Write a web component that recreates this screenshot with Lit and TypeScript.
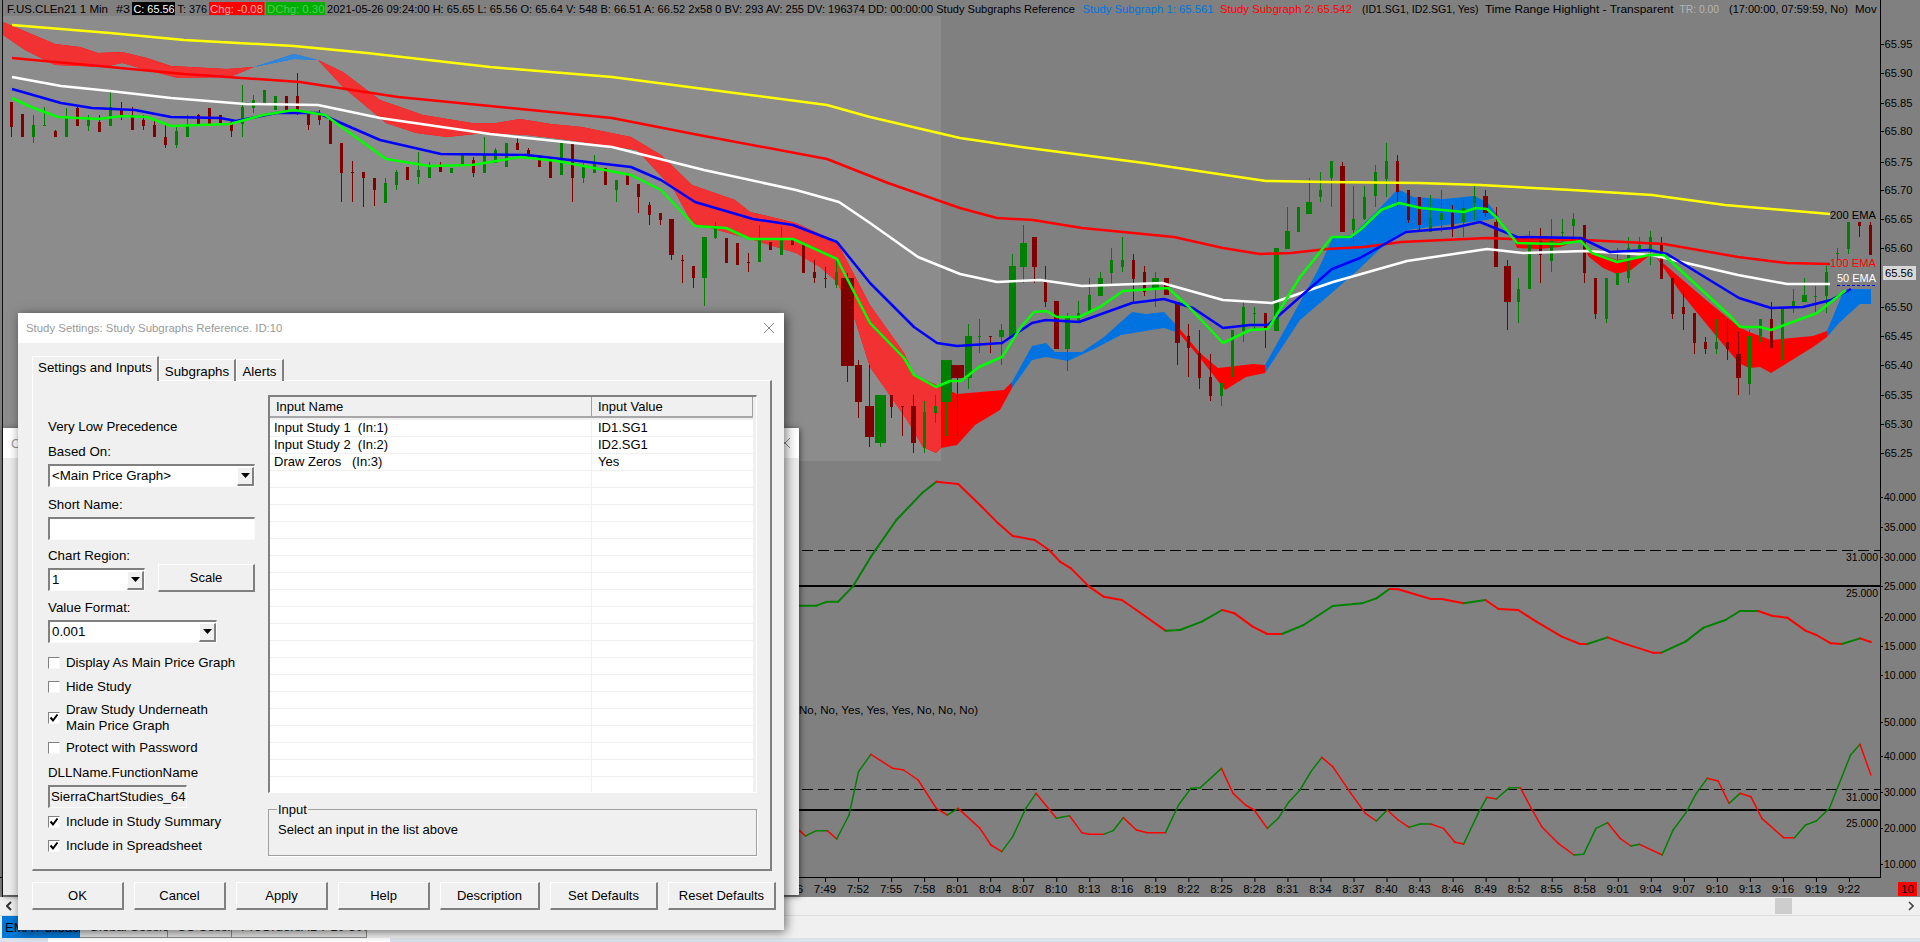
import { LitElement, html, css, svg } from "lit";
import { customElement } from "lit/decorators.js";

type P = [number, number];
const RED = "#ff0000", GRN = "#008000", DRED = "#800000";

const yellow: P[] = [[12,25],[110,33],[184,40],[294,46],[367,53],[490,67],[612,77],[735,93],[827,105],[870,117],[960,138],[1021,147],[1144,163],[1266,181],[1327,182],[1419,183],[1480,185],[1572,190],[1652,195],[1725,205],[1830,214]];
const red100: P[] = [[12,58],[110,67],[184,74],[300,82],[398,97],[490,106],[612,118],[704,136],[827,159],[888,183],[960,208],[997,218],[1033,220],[1082,228],[1174,237],[1223,248],[1260,254],[1291,253],[1327,249],[1364,247],[1401,242],[1487,238],[1511,239],[1585,240],[1664,244],[1738,257],[1787,263],[1830,264]];
const white50: P[] = [[12,77],[61,86],[110,91],[171,98],[245,104],[318,105],[380,118],[490,134],[612,147],[704,170],[796,190],[839,202],[870,223],[918,257],[960,274],[997,282],[1040,280],[1082,286],[1162,283],[1223,300],[1272,303],[1333,282],[1407,261],[1487,249],[1523,253],[1585,251],[1652,255],[1738,275],[1787,284],[1830,284]];
const blue: P[] = [[12,89],[61,103],[92,108],[135,110],[171,117],[220,118],[236,121],[276,113],[318,113],[380,140],[441,154],[527,155],[631,167],[661,180],[695,202],[753,219],[793,225],[837,242],[870,283],[914,327],[937,343],[957,346],[1002,343],[1032,323],[1046,320],[1079,322],[1132,303],[1164,299],[1193,308],[1223,328],[1250,325],[1268,325],[1332,269],[1360,258],[1406,232],[1453,228],[1480,222],[1517,237],[1581,238],[1610,252],[1649,250],[1667,254],[1739,298],[1771,308],[1803,307],[1831,300],[1851,289]];
const green: P[] = [[12,98],[31,107],[58,117],[98,119],[122,116],[147,117],[171,126],[230,124],[263,115],[294,110],[325,115],[386,159],[429,166],[472,165],[520,157],[557,161],[631,175],[661,190],[695,226],[726,228],[750,239],[793,239],[837,259],[870,323],[904,358],[914,375],[936,387],[950,381],[961,381],[979,367],[1002,357],[1021,327],[1034,312],[1046,311],[1057,317],[1079,317],[1100,307],[1123,291],[1168,288],[1189,307],[1223,343],[1250,330],[1268,329],[1300,277],[1332,237],[1350,237],[1360,230],[1381,210],[1399,203],[1421,208],[1464,212],[1476,208],[1487,209],[1496,217],[1517,243],[1560,244],[1581,241],[1592,253],[1617,262],[1649,255],[1664,255],[1731,317],[1740,327],[1760,327],[1771,330],[1817,313],[1846,290]];

const RIB_RED = "#ff0000", RIB_BLUE = "#0073e0";
const ribbons: { c: string; up: P[]; lo: P[] }[] = [
  { c: RIB_RED, up: [[3,22],[55,44],[80,47],[98,53],[122,52],[147,58],[171,66],[227,69],[254,67]], lo: [[3,35],[25,50],[55,65],[104,67],[122,63],[147,70],[178,78],[230,77],[254,67]] },
  { c: RIB_BLUE, up: [[254,67],[294,54],[318,60]], lo: [[254,67],[294,59],[318,60]] },
  { c: RIB_RED, up: [[318,60],[343,72],[380,100],[423,115],[472,123],[496,123],[520,119],[551,124],[582,127],[631,137],[661,155],[692,185],[735,200],[750,212],[796,223],[837,242],[870,305],[904,353],[914,375],[941,387],[957,394],[1004,390],[1012,382]], lo: [[318,60],[343,87],[386,123],[416,133],[447,137],[484,133],[527,135],[569,140],[637,150],[674,190],[692,223],[750,239],[796,253],[820,267],[837,282],[855,320],[870,367],[907,420],[923,447],[936,453],[941,448],[957,445],[975,425],[1000,410],[1012,388]] },
  { c: RIB_BLUE, up: [[1012,382],[1032,346],[1046,343],[1055,352],[1082,352],[1104,337],[1132,312],[1146,314],[1164,312],[1179,328]], lo: [[1012,388],[1032,360],[1046,357],[1068,361],[1096,348],[1121,335],[1164,328],[1179,333]] },
  { c: RIB_RED, up: [[1179,328],[1200,353],[1218,368],[1253,364],[1265,365]], lo: [[1179,333],[1200,358],[1225,390],[1246,377],[1265,373]] },
  { c: RIB_BLUE, up: [[1265,365],[1318,270],[1333,237],[1352,235],[1376,212],[1398,189],[1413,197],[1444,199],[1474,196],[1487,202],[1499,217],[1514,240]], lo: [[1265,373],[1300,320],[1327,297],[1358,270],[1382,247],[1407,230],[1462,223],[1487,220],[1499,217],[1514,240]] },
  { c: RIB_RED, up: [[1514,240],[1574,242]], lo: [[1514,240],[1517,248],[1539,249],[1560,247],[1574,242]] },
  { c: RIB_RED, up: [[1585,250],[1617,260],[1649,255]], lo: [[1585,250],[1589,257],[1603,268],[1617,274],[1631,270],[1649,256]] },
  { c: RIB_RED, up: [[1656,257],[1706,300],[1739,327],[1749,332],[1771,340],[1813,336],[1827,331]], lo: [[1656,257],[1681,293],[1717,337],[1739,363],[1749,368],[1760,367],[1771,373],[1813,347],[1827,337]] },
  { c: RIB_BLUE, up: [[1827,331],[1844,290],[1851,289],[1871,289]], lo: [[1827,337],[1839,323],[1860,304],[1871,304]] },
];

// high, body top, body bottom, low, colour (1 = up/green, 0 = down/red), body width
const C: number[][] = [
[102,102,127,137,0],[114,114,137,137,0],[115,125,137,143,1],[107,125,126,126,1],[130,131,137,137,0],[108,117,137,137,1],[107,108,126,126,0],[115,118,126,131,1],[115,122,132,132,0],[92,107,126,126,1],
[102,110,117,120,0],[107,115,130,130,0],[115,120,126,130,0],[120,125,137,137,0],[125,137,145,148,0],[125,131,145,148,1],[115,124,137,137,1],[114,115,124,124,0],[108,108,124,124,0],[115,115,123,123,0],
[120,122,131,137,0],[85,107,124,137,1],[95,100,108,113,1],[90,90,103,103,1],[96,96,110,110,1],[96,96,110,110,0],[73,96,110,115,0],[113,113,125,130,0],[110,115,120,125,0],[118,118,144,144,0],
[143,143,173,202,0],[161,172,173,202,0],[172,172,178,207,0],[178,178,190,206,0],[178,183,203,203,1],[170,172,185,190,1],[167,167,180,180,0],[152,170,177,184,1],[162,167,178,178,1],[162,167,172,172,0],
[168,168,173,173,1],[155,155,165,165,1],[157,160,173,177,0],[137,155,173,173,1],[148,150,163,163,1],[143,143,167,167,1],[137,143,150,150,0],[148,150,157,157,0],[155,157,167,167,0],[157,157,178,178,0],
[142,143,175,175,1],[143,143,178,202,0],[163,165,178,183,1],[155,163,173,173,1],[168,168,185,185,0],[180,180,190,202,1],[173,173,185,185,0],[184,184,197,213,0],[202,205,215,225,0],[213,213,220,225,0],
[219,219,255,260,0,5],[255,260,261,283,0],[266,266,278,288,0],[237,237,278,306,1,5],[222,228,238,239,1],[238,238,263,263,0],[243,243,265,265,0],[253,262,263,272,0],[225,238,262,262,1],[242,242,250,250,0],
[227,240,255,255,1],[239,239,245,245,0],[245,245,273,273,0],[260,272,278,283,0],[267,278,279,288,0],[260,272,285,288,1],[273,278,366,382,0,13],[360,365,402,418,0,7],[365,406,437,447,0,9],[395,395,443,447,1,11],
[395,395,407,418,0],[406,406,407,436,0],[395,406,443,453,0,5],[401,412,448,453,1],[395,406,413,423,1],[360,360,402,436,1,11],[365,365,378,436,0,13],[324,336,378,389,1,7],[319,336,337,353,1],[336,336,337,353,0],
[324,330,337,365,1,5],[254,266,337,337,1,7],[225,243,267,283,1,7],[237,237,267,283,0,5],[266,281,302,307,0],[301,301,349,349,0,5],[313,318,349,371,1,5],[301,313,322,322,1],[278,295,312,312,1],[272,278,296,296,1,5],
[248,260,273,284,1],[237,260,267,272,1],[254,260,279,302,0],[266,272,292,296,0],[272,278,288,307,1,7],[278,278,295,295,0,5],[302,302,343,365,0,5],[324,336,348,377,0],[330,353,378,389,0],[354,377,396,401,0],
[377,383,396,406,1],[330,330,377,377,1],[302,307,331,342,1],[307,313,314,330,1],[313,313,330,348,0],[248,248,331,331,1,5],[207,231,249,249,1,5],[207,207,232,232,1],[178,202,214,214,1,6],[172,190,197,202,1],
[161,161,178,207,1],[162,166,232,232,0,5],[186,219,230,243,1],[186,197,219,220,1],[165,172,196,207,1],[143,161,179,197,1],[155,161,192,207,0],[190,190,220,223,0],[197,197,225,230,0],[195,218,232,232,1],
[190,213,220,232,1],[205,213,228,237,0],[200,208,222,237,1],[186,196,203,220,1],[190,196,213,217,0,5],[207,222,267,267,0,4],[260,266,302,330,0,7],[278,289,302,323,1],[231,243,289,289,1],[228,237,255,283,0],
[219,237,261,272,1],[219,232,233,243,1],[213,219,226,243,1],[225,225,273,283,0],[278,278,314,319,0],[278,278,319,323,1],[248,273,285,285,1],[237,248,278,283,1],[237,245,249,249,1],[231,237,250,265,1],
[237,243,279,279,0],[278,278,314,319,0],[290,307,314,330,0],[313,313,343,354,0],[337,342,349,354,0],[319,342,349,354,1],[319,342,349,360,0],[332,354,378,395,0,5],[330,336,384,395,1],[319,319,336,342,1],
[302,319,348,348,0],[308,308,343,360,1],[289,301,308,313,1],[278,295,302,302,1,5],[286,296,297,313,1],[266,272,296,313,1],[248,253,254,260,1],[222,222,249,254,1],[222,222,226,237,0],[222,225,255,255,0],
];

const osc1z: P[] = [[27,497],[50,497],[65,485],[80,485],[100,440],[125,350],[160,240],[195,160],[215,125],[245,132],[275,195],[300,250],[320,288],[350,300],[370,330],[385,365],[400,385],[425,440],[445,470],[470,480],[490,510],[530,572],[550,570],[580,545],[608,510],[625,520],[650,560],[670,582],[690,582],[720,555],[760,498],[800,490],[820,475],[838,447],[850,448],[895,477],[910,477],[940,490],[970,480],[988,507],[1015,510],[1040,545],[1075,590],[1100,612],[1110,612],[1138,592],[1160,610],[1200,638],[1212,638],[1245,605],[1270,563],[1300,540],[1320,513],[1345,513],[1365,528],[1385,533],[1410,572],[1425,585],[1445,610],[1460,612],[1485,595],[1500,606]];
const osc2z: P[] = [[27,1172],[35,1188],[50,1172],[65,1172],[78,1197],[95,1125],[108,995],[125,943],[155,985],[170,990],[190,1020],[215,1105],[230,1125],[245,1105],[275,1165],[290,1215],[305,1235],[320,1190],[338,1105],[352,1060],[380,1135],[398,1127],[415,1178],[425,1183],[445,1183],[458,1172],[472,1133],[490,1170],[505,1178],[530,1178],[548,1095],[565,1045],[578,1043],[607,985],[623,1060],[640,1095],[652,1110],[670,1165],[685,1135],[700,1085],[715,1050],[730,995],[745,952],[760,980],[785,1060],[805,1120],[820,1143],[835,1110],[850,1140],[865,1162],[880,1152],[895,1152],[912,1165],[928,1207],[940,1212],[960,1120],[972,1072],[985,1077],[1003,1043],[1018,1043],[1033,1105],[1048,1162],[1070,1210],[1092,1245],[1105,1243],[1122,1165],[1138,1148],[1155,1195],[1170,1218],[1182,1213],[1213,1245],[1228,1170],[1245,1120],[1260,1060],[1275,1015],[1290,1023],[1305,1090],[1320,1060],[1335,1070],[1350,1135],[1380,1193],[1395,1193],[1410,1155],[1425,1143],[1443,1105],[1472,945],[1485,913],[1500,1005]];
const fromZoom = (p: P[]): P[] => p.map(([x, y]) => [780 + x / 1.375, 440 + y / 3] as P);

const headerItems: { t: string; x: number; x2: number; c: string }[] = [
  { t: "F.US.CLEn21  1 Min", x: 7, x2: 108, c: "#000" },
  { t: "#3", x: 116, x2: 130, c: "#000" },
  { t: "C: 65.56", x: 133.5, x2: 174.5, c: "#fff" },
  { t: "T: 376", x: 177.5, x2: 207, c: "#000" },
  { t: "Chg: -0.08", x: 210, x2: 263, c: "#ffb0b0" },
  { t: "DChg: 0.30", x: 267, x2: 324.5, c: "#58c858" },
  { t: "2021-05-26 09:24:00 H: 65.65 L: 65.56 O: 65.64 V: 548 B: 66.51 A: 66.52 2x58 0 BV: 293 AV: 255 DV: 196374 DD: 00:00:00 Study Subgraphs Reference", x: 327, x2: 1075, c: "#000" },
  { t: "Study Subgraph 1: 65.561", x: 1082.5, x2: 1213.5, c: "#0073e0" },
  { t: "Study Subgraph 2: 65.542", x: 1220, x2: 1352, c: "#ff0000" },
  { t: "(ID1.SG1, ID2.SG1, Yes)", x: 1362, x2: 1478.5, c: "#000" },
  { t: "Time Range Highlight - Transparent", x: 1485, x2: 1673.5, c: "#000" },
  { t: "TR: 0.00", x: 1679.5, x2: 1719, c: "#b4b4b4" },
  { t: "(17:00:00, 07:59:59, No)", x: 1729, x2: 1848, c: "#000" },
];

const priceAxis: [string, number][] = [["65.95",44],["65.90",73],["65.85",103],["65.80",131],["65.75",162],["65.70",190],["65.65",219],["65.60",248],["65.50",307],["65.45",336],["65.40",365],["65.35",395],["65.30",424],["65.25",453]];
const oscAxis: [string, number][] = [["40.000",497],["35.000",527],["30.000",557],["25.000",586],["20.000",617],["15.000",646],["10.000",675],["50.000",722],["40.000",756],["30.000",792],["20.000",828],["10.000",864]];
const times = (() => {
  const out: string[] = [];
  for (let m = 7 * 60 + 46; m <= 9 * 60 + 22; m += 3) out.push(`${Math.floor(m / 60)}:${String(m % 60).padStart(2, "0")}`);
  return out;
})();

const pts = (p: P[]) => p.map(([x, y]) => `${x.toFixed(1)},${y.toFixed(1)}`).join(" ");

function oscLine(points: P[], w: number) {
  let last = GRN;
  const segs = [];
  for (let i = 1; i < points.length; i++) {
    const [a, b] = [points[i - 1], points[i]];
    const c = b[1] < a[1] - 0.5 ? GRN : b[1] > a[1] + 0.5 ? RED : (i % 2 ? last : RED);
    last = c;
    segs.push(svg`<line x1=${a[0]} y1=${a[1]} x2=${b[0]} y2=${b[1]} stroke=${c} stroke-width=${w} stroke-linecap="round"></line>`);
  }
  return segs;
}

function ribbonLayer(on: boolean) {
  return ribbons.map((r) => {
    const fill = on ? (r.c === RIB_RED ? "#f23232" : "#3286dc") : r.c;
    return svg`<polygon points=${pts([...r.up, ...[...r.lo].reverse()])} fill=${fill}></polygon>`;
  });
}

function chart() {
  return svg`<svg class="chart" width="1920" height="897" viewBox="0 0 1920 897">
    <defs><clipPath id="session"><rect x="3" y="16" width="938" height="445"></rect></clipPath></defs>
    <rect width="1920" height="897" fill="#808080"></rect>
    <rect x="3" y="16" width="938" height="445" fill="#8c8c8c"></rect>
    <rect x="2" y="0" width="1" height="897" fill="#111"></rect>
    ${ribbonLayer(false)}
    <g clip-path="url(#session)">${ribbonLayer(true)}</g>
    ${C.map((c, k) => {
      const x = 11 * (k + 1);
      const col = c[4] ? GRN : DRED;
      const w = c[5] ?? 3;
      return svg`<rect x=${x} y=${c[0]} width="1" height=${c[3] - c[0]} fill=${col}></rect>
        <rect x=${x - Math.floor(w / 2)} y=${c[1]} width=${w} height=${Math.max(1, c[2] - c[1])} fill=${col}></rect>`;
    })}
    <polyline class="ema" points=${pts(white50)} stroke="#ffffff"></polyline>
    <polyline class="ema" points=${pts(red100)} stroke="#ff0000"></polyline>
    <polyline class="ema" points=${pts(yellow)} stroke="#ffff00"></polyline>
    <polyline class="ema" points=${pts(blue)} stroke="#0000ff"></polyline>
    <polyline class="ema" points=${pts(green)} stroke="#00ff00"></polyline>
    <line x1="1837" y1="285.5" x2="1876" y2="285.5" stroke="#0000ff" stroke-dasharray="3 2"></line>

    <rect x="132" y="2" width="43" height="13" fill="#000"></rect>
    <rect x="209" y="2" width="55.5" height="13" fill="#ff0000"></rect>
    <rect x="266" y="2" width="59" height="13" fill="#00b000"></rect>
    ${headerItems.map((h) => svg`<text class="h" x=${h.x} y="13" fill=${h.c} textLength=${h.x2 - h.x} lengthAdjust="spacingAndGlyphs">${h.t}</text>`)}
    <text class="h" x="1855" y="13" fill="#000">Mov</text>
    <rect x="1880" y="0" width="40" height="16" fill="#808080"></rect>

    <rect x="1880" y="0" width="1" height="878" fill="#000"></rect>
    ${priceAxis.map(([t, y]) => svg`<rect x="1880" y=${y} width="4" height="1" fill="#000"></rect><text class="h" x="1884.5" y=${y + 4} fill="#000" textLength="28" lengthAdjust="spacingAndGlyphs">${t}</text>`)}
    ${oscAxis.map(([t, y]) => svg`<rect x="1880" y=${y} width="3" height="1" fill="#000"></rect><text class="h" x="1884" y=${y + 4} fill="#000" textLength="32" lengthAdjust="spacingAndGlyphs">${t}</text>`)}

    <text class="h" x="1830" y="219" fill="#000" textLength="46" lengthAdjust="spacingAndGlyphs">200 EMA</text>
    <text class="h" x="1830" y="267" fill="#ff0000" textLength="46" lengthAdjust="spacingAndGlyphs">100 EMA</text>
    <text class="h" x="1837" y="282" fill="#ffffff" textLength="39" lengthAdjust="spacingAndGlyphs">50 EMA</text>
    <rect x="1883" y="266" width="33" height="14" fill="#d8d8d8"></rect>
    <text class="h" x="1885" y="277" fill="#000" textLength="28" lengthAdjust="spacingAndGlyphs">65.56</text>

    <line x1="786" y1="550.5" x2="1880" y2="550.5" stroke="#000" stroke-dasharray="11 5"></line>
    <rect x="786" y="585" width="1094" height="2" fill="#000"></rect>
    <line x1="786" y1="789.5" x2="1880" y2="789.5" stroke="#000" stroke-dasharray="11 5"></line>
    <rect x="786" y="809" width="1094" height="2" fill="#000"></rect>
    <text class="h" x="1846" y="561" fill="#000" textLength="32" lengthAdjust="spacingAndGlyphs">31.000</text>
    <text class="h" x="1846" y="597" fill="#000" textLength="32" lengthAdjust="spacingAndGlyphs">25.000</text>
    <text class="h" x="1846" y="801" fill="#000" textLength="32" lengthAdjust="spacingAndGlyphs">31.000</text>
    <text class="h" x="1846" y="827" fill="#000" textLength="32" lengthAdjust="spacingAndGlyphs">25.000</text>
    ${oscLine(fromZoom(osc1z), 2)}
    ${oscLine(fromZoom(osc2z), 1.5)}
    <text class="h" x="799" y="714" fill="#000" textLength="179" lengthAdjust="spacingAndGlyphs">No, No, Yes, Yes, Yes, No, No, No)</text>

    <rect x="0" y="877" width="1880" height="1" fill="#000"></rect>
    ${times.map((t, i) => {
      const x = 792 + 33.03 * i;
      return svg`<rect x=${x} y="877" width="1" height="5" fill="#000"></rect><text class="h" x=${x} y="893" text-anchor="middle" fill="#000">${t}</text>`;
    })}
    <rect x="1898" y="882" width="19" height="14" fill="#ff0000"></rect>
    <text class="h" x="1907.5" y="893" text-anchor="middle" fill="#000">10</text>
  </svg>`;
}

const check = html`<svg class="tick" viewBox="0 0 10 10" width="10" height="10"><path d="M1.5 4.5 L4 7.5 L8.5 1.5" fill="none" stroke="#000" stroke-width="2"></path></svg>`;
const arrow = html`<span class="drop"><svg viewBox="0 0 9 5" width="9" height="5"><path d="M0 0H9L4.5 5Z" fill="#000"></path></svg></span>`;
const closeX = html`<svg class="x" viewBox="0 0 10 10" width="10" height="10"><path d="M0 0L10 10M10 0L0 10" stroke="#8c8c8c" fill="none"></path></svg>`;

@customElement("app-root")
export class AppRoot extends LitElement {
  static styles = css`
    :host { display: block; position: relative; width: 1920px; height: 942px; overflow: hidden; font-family: "Liberation Sans", Arial, sans-serif; font-size: 13px; color: #000; }
    .desk { display: flex; flex-direction: column; height: 942px; background: #f0f0f0; }
    .chart { display: block; flex: none; }
    .h { font-family: "Liberation Sans", Arial, sans-serif; font-size: 11.5px; }
    .ema { fill: none; stroke-width: 2.5; stroke-linejoin: round; }
    .hscroll { flex: none; height: 18px; background: #f0f0f0; border-bottom: 1px solid #dcdcdc; display: flex; align-items: center; padding: 0 6px; justify-content: space-between; }
    .hscroll .track { flex: 1; display: flex; justify-content: flex-end; padding-right: 116px; }
    .hscroll .thumb { width: 17px; height: 16px; background: #cdcdcd; }
    .hscroll svg { display: block; }
    .tabbar { flex: none; height: 22px; display: flex; padding-left: 2px; background: #f0f0f0; }
    .tabbar span { display: flex; align-items: center; padding: 0 0 0 9px; border-right: 1px solid #8c8c8c; border-bottom: 1px solid #8c8c8c; background: #e6e6e6; color: #222; box-sizing: border-box; white-space: nowrap; overflow: hidden; }
    .tabbar .on { background: #0078d7; width: 78px; color: #001; border: none; padding-left: 3px; }
    .tabbar .s1 { width: 88px; }
    .tabbar .s2 { width: 64px; }
    .tabbar .s3 { width: 135px; }
    .stripe { flex: 1; background: #dde3ec; display: flex; padding-left: 48px; }
    .stripe i { display: block; width: 342px; background: #fff; }

    .win { position: absolute; box-sizing: border-box; background: #f0f0f0; }
    .back { left: 3px; top: 428px; width: 796px; height: 467px; background: #ebebeb; box-shadow: 1px 1px 6px rgba(0,0,0,.55); }
    .front { left: 18px; top: 313px; width: 766px; height: 617px; box-shadow: 2px 2px 10px rgba(0,0,0,.55); }
    .title { height: 30px; background: #fff; display: flex; align-items: center; justify-content: space-between; padding: 0 10px 0 8px; color: #999; font-size: 11.4px; }
    .back .title { padding: 0 9px 0 8px; font-size: 13px; }
    .x { display: block; }

    .body { padding: 14px 0 0 14px; }
    .tabs { display: flex; align-items: flex-end; height: 24px; position: relative; z-index: 1; margin-bottom: -1px; font-size: 13.3px; }
    .tab { box-sizing: border-box; height: 22px; display: flex; align-items: center; justify-content: center; border-top: 1px solid #fff; border-left: 1px solid #fff; border-right: 2px solid #808080; padding-top: 1px; }
    .tab.on { height: 25px; width: 127px; background: #f0f0f0; padding: 0 0 3px; }
    .t2 { width: 77px; }
    .t3 { width: 48px; }
    .panel { box-sizing: border-box; width: 740px; height: 491px; border-top: 1px solid #fff; border-left: 1px solid #fff; border-right: 2px solid #808080; border-bottom: 2px solid #808080; display: flex; padding: 14px 0 0 15px; gap: 13px; }

    .left { width: 207px; flex: none; display: flex; flex-direction: column; padding-top: 24px; font-size: 13.3px; }
    .lbl { display: block; line-height: 16px; height: 16px; white-space: nowrap; }
    .m12 { margin-top: 12px; }
    .m10 { margin-top: 10px; }
    .m9 { margin-top: 9px; }
    .m8 { margin-top: 8px; }
    .m4 { margin-top: 4px; }

    .sunk { box-sizing: border-box; height: 23px; background: #fff; border-top: 2px solid #808080; border-left: 2px solid #808080; border-right: 1px solid #fbfbfb; border-bottom: 1px solid #fbfbfb; display: flex; align-items: center; justify-content: space-between; padding-left: 2px; line-height: 16px; }
    .ro { background: #f0f0f0; width: 139px; overflow: hidden; white-space: nowrap; padding-left: 1px; }
    .w97 { width: 97px; margin-top: 4px; }
    .w169 { width: 169px; }
    .drop { box-sizing: border-box; width: 17px; height: 19px; display: flex; align-items: center; justify-content: center; background: #f0f0f0; border-top: 1px solid #fff; border-left: 1px solid #fff; border-right: 2px solid #808080; border-bottom: 2px solid #808080; flex: none; }
    .drop svg { display: block; }

    .rowline { display: flex; justify-content: space-between; align-items: flex-start; height: 28px; }
    .btn { box-sizing: border-box; display: flex; align-items: center; justify-content: center; height: 28px; background: #f0f0f0; border-top: 1px solid #fff; border-left: 1px solid #fff; border-right: 2px solid #808080; border-bottom: 2px solid #808080; white-space: nowrap; }
    .scale { width: 97px; font-size: 13px; }

    .chk { display: flex; align-items: center; gap: 6px; line-height: 16px; white-space: nowrap; }
    .box { box-sizing: border-box; width: 12px; height: 12px; background: #fff; border-top: 1px solid #808080; border-left: 1px solid #808080; border-right: 1px solid #f8f8f8; border-bottom: 1px solid #f8f8f8; display: flex; align-items: center; justify-content: center; flex: none; }
    .tick { display: block; }
    .g8 { margin-top: 8px; }
    .g7 { margin-top: 7px; }
    .g6 { margin-top: 6px; }

    .right { width: 489px; flex: none; display: flex; flex-direction: column; gap: 16px; }
    .list { box-sizing: border-box; height: 398px; overflow: hidden; border-top: 2px solid #808080; border-left: 2px solid #808080; border-right: 1px solid #fff; border-bottom: 1px solid #fff; background: #f0f0f0; }
    .row { display: grid; grid-template-columns: 322px 161px; }
    .head { height: 19px; border-bottom: 2px solid #a8a8a8; box-sizing: content-box; width: 483px; }
    .head span { border-right: 1px solid #a0a0a0; padding-left: 6px; line-height: 19px; }
    .head span + span { padding-left: 6px; }
    .items { margin-top: 2px; width: 483px; background: #fff; }
    .items .row { height: 17px; box-sizing: border-box; border-bottom: 1px solid #f0f0f0; }
    .items span { line-height: 16px; padding-left: 4px; border-right: 1px solid #f0f0f0; white-space: pre; }
    .items span + span { padding-left: 6px; border-right: none; }

    .group { position: relative; box-sizing: border-box; height: 47px; border: 1px solid #a0a0a0; box-shadow: 1px 1px 0 #fff; padding: 12px 0 0 9px; line-height: 16px; }
    .legend { position: absolute; left: 8px; top: -8px; padding: 0 1px; background: #f0f0f0; line-height: 16px; }

    .actions { display: flex; gap: 10px; margin-top: 11px; }
    .w92 { width: 92px; } .w100 { width: 100px; } .w108 { width: 108px; }
  `;

  private chk(text: unknown, on: boolean, cls = "") {
    return html`<div class="chk ${cls}"><span class="box">${on ? check : ""}</span><span>${text}</span></div>`;
  }

  render() {
    const rows: [string, string][] = [["Input Study 1  (In:1)", "ID1.SG1"], ["Input Study 2  (In:2)", "ID2.SG1"], ["Draw Zeros   (In:3)", "Yes"]];
    for (let i = 0; i < 20; i++) rows.push(["", ""]);
    return html`
      <div class="desk">
        ${chart()}
        <div class="hscroll">
          <svg viewBox="0 0 6 10" width="6" height="10"><path d="M5 1L1 5L5 9" fill="none" stroke="#333" stroke-width="2"></path></svg>
          <div class="track"><span class="thumb"></span></div>
          <svg viewBox="0 0 6 10" width="6" height="10"><path d="M1 1L5 5L1 9" fill="none" stroke="#444" stroke-width="1.6"></path></svg>
        </div>
        <div class="tabbar">
          <span class="on">EMA Pullback</span>
          <span class="s1">Global Session</span>
          <span class="s2">US Session</span>
          <span class="s3">ProOrdersADT 10 800</span>
        </div>
        <div class="stripe"><i></i></div>
      </div>

      <div class="win back">
        <div class="title"><span>C</span>${closeX}</div>
      </div>

      <div class="win front">
        <div class="title"><span>Study Settings: Study Subgraphs Reference. ID:10</span>${closeX}</div>
        <div class="body">
          <div class="tabs">
            <div class="tab on">Settings and Inputs</div>
            <div class="tab t2">Subgraphs</div>
            <div class="tab t3">Alerts</div>
          </div>
          <div class="panel">
            <div class="left">
              <div class="lbl">Very Low Precedence</div>
              <div class="lbl m9">Based On:</div>
              <div class="sunk m4"><span>&lt;Main Price Graph&gt;</span>${arrow}</div>
              <div class="lbl m10">Short Name:</div>
              <div class="sunk m4"></div>
              <div class="lbl m8">Chart Region:</div>
              <div class="rowline">
                <div class="sunk w97"><span>1</span>${arrow}</div>
                <div class="btn scale">Scale</div>
              </div>
              <div class="lbl m8">Value Format:</div>
              <div class="sunk m4 w169"><span>0.001</span>${arrow}</div>
              ${this.chk("Display As Main Price Graph", false, "m12")}
              ${this.chk("Hide Study", false, "g8")}
              ${this.chk(html`Draw Study Underneath<br />Main Price Graph`, true, "g7")}
              ${this.chk("Protect with Password", false, "g6")}
              <div class="lbl m9">DLLName.FunctionName</div>
              <div class="sunk ro m4">SierraChartStudies_64</div>
              ${this.chk("Include in Study Summary", true, "g6")}
              ${this.chk("Include in Spreadsheet", true, "m8")}
            </div>
            <div class="right">
              <div class="list">
                <div class="row head"><span>Input Name</span><span>Input Value</span></div>
                <div class="items">
                  ${rows.map(([a, b]) => html`<div class="row"><span>${a}</span><span>${b}</span></div>`)}
                </div>
              </div>
              <div class="group">
                <span class="legend">Input</span>
                Select an input in the list above
              </div>
            </div>
          </div>
          <div class="actions">
            <div class="btn w92">OK</div>
            <div class="btn w92">Cancel</div>
            <div class="btn w92">Apply</div>
            <div class="btn w92">Help</div>
            <div class="btn w100">Description</div>
            <div class="btn w108">Set Defaults</div>
            <div class="btn w108">Reset Defaults</div>
          </div>
        </div>
      </div>
    `;
  }
}
